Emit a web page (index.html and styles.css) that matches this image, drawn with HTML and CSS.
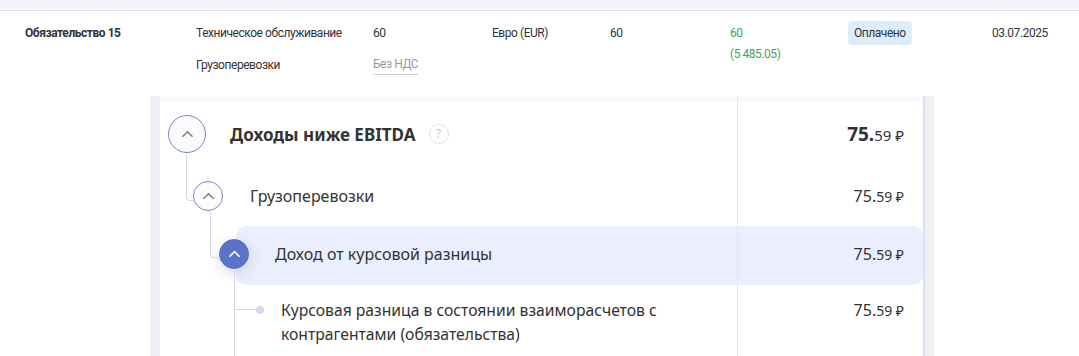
FILE: index.html
```html
<!DOCTYPE html>
<html lang="ru">
<head>
    <meta charset="UTF-8">
    <meta name="viewport" content="width=device-width, initial-scale=1.0">
    <title>Обязательства и доходы</title>
    <link rel="stylesheet" href="styles.css">
</head>
<body>
    <div class="toolbar-strip"></div>

    <!-- Obligation row -->
    <div class="obligation">
        <div class="cell name">Обязательство 15</div>
        <div class="cell stack">
            <span>Техническое обслуживание</span>
            <span>Грузоперевозки</span>
        </div>
        <div class="cell stack">
            <span>60</span>
            <span class="vat">Без НДС</span>
        </div>
        <div class="cell">Евро (EUR)</div>
        <div class="cell">60</div>
        <div class="cell paid-sum">
            <span>60</span>
            <span>(5 485.05)</span>
        </div>
        <div class="cell"><span class="badge">Оплачено</span></div>
        <div class="cell">03.07.2025</div>
    </div>

    <!-- Income tree -->
    <div class="report">
        <div class="report-cap">
            <div></div>
            <div class="value-col"></div>
        </div>

        <div class="tree-row level-1">
            <div class="label-col">
                <button class="toggle toggle-lg">
                    <svg viewBox="0 0 14 8" width="13" height="8"><path d="M1.5 7 L7 1.5 L12.5 7" fill="none" stroke="#7e7e7e" stroke-width="1.6"/></svg>
                </button>
                <span class="title">Доходы ниже EBITDA</span>
                <span class="help">?</span>
            </div>
            <div class="value-col">
                <span class="amount amount-lg"><b>75.</b>59 ₽</span>
            </div>
        </div>

        <div class="tree-row level-2">
            <div class="label-col">
                <button class="toggle sub">
                    <svg viewBox="0 0 14 8" width="13" height="8"><path d="M1.5 7 L7 1.5 L12.5 7" fill="none" stroke="#7e7e7e" stroke-width="1.6"/></svg>
                </button>
                <span class="label">Грузоперевозки</span>
            </div>
            <div class="value-col">
                <span class="amount"><span class="int">75.</span>59 ₽</span>
            </div>
        </div>

        <div class="tree-row level-3 active">
            <div class="label-col">
                <button class="toggle sub filled">
                    <svg viewBox="0 0 14 8" width="13" height="8"><path d="M1.5 7 L7 1.5 L12.5 7" fill="none" stroke="#ffffff" stroke-width="1.7"/></svg>
                </button>
                <span class="label">Доход от курсовой разницы</span>
            </div>
            <div class="value-col">
                <span class="amount"><span class="int">75.</span>59 ₽</span>
            </div>
        </div>

        <div class="tree-row level-4">
            <div class="label-col">
                <span class="leaf-dot"></span>
                <span class="label">Курсовая разница в состоянии взаиморасчетов с контрагентами (обязательства)</span>
            </div>
            <div class="value-col">
                <span class="amount"><span class="int">75.</span>59 ₽</span>
            </div>
        </div>
    </div>
</body>
</html>
```

FILE: styles.css
```css
body {
    margin: 0;
    font-family: 'Noto Sans', sans-serif;
    color: #333333;
    background-color: #ffffff;
}
.toolbar-strip {
    height: 10px;
    background-color: #f5f5f6;
    border-bottom: 1px solid #d9def4;
}

/* obligation row */
.obligation {
    display: grid;
    grid-template-columns: 171px 177px 119px 118px 120px 118px 144px 1fr;
    padding: 12px 0 0 25px;
    height: 73px;
    font-family: Roboto, sans-serif;
    font-size: 12px;
    letter-spacing: -0.45px;
    line-height: 20px;
    color: #333333;
}
.cell {
    display: flex;
    flex-direction: column;
    align-items: flex-start;
}
.name {
    font-weight: 700;
}
.stack {
    gap: 12px;
}
.vat {
    color: #9a9a9a;
    border-bottom: 1px solid #cfcfcf;
    line-height: 19px;
}
.paid-sum {
    color: #3fa45b;
    gap: 1px;
}
.badge {
    display: inline-block;
    margin-top: -2px;
    padding: 0 6px;
    line-height: 24px;
    border-radius: 4px;
    background-color: #dcedfc;
    color: #333333;
}

/* report panel */
.report {
    margin-left: 150px;
    width: 763px;
    height: 260px;
    overflow: hidden;
    border-left: 10px solid #eff0f6;
    border-right: 2px solid #dde0eb;
    box-shadow: 9px 0 0 #eff0f6;
    background-color: #ffffff;
}
.report-cap {
    display: grid;
    grid-template-columns: 577px 1fr;
    height: 6px;
    background-color: #f8f9fb;
}
.tree-row {
    display: grid;
    grid-template-columns: 577px 1fr;
}
.value-col {
    border-left: 1px solid #e2e4ee;
    display: flex;
    justify-content: flex-end;
    align-items: center;
    padding-right: 19px;
}
.label-col {
    display: flex;
    align-items: center;
}
.level-1 {
    height: 64px;
}
.level-1 .label-col {
    padding-left: 8px;
}
.level-2 {
    height: 60px;
}
.level-2 .label-col {
    padding-left: 33px;
}
.level-3 {
    height: 59px;
}
.level-3.active {
    margin-left: 76px;
    grid-template-columns: 501px 1fr;
    background-color: #ebeefc;
    border-radius: 10px;
}
.level-3 .label-col {
    margin-left: -17px;
}
.level-3 .label-col,
.level-3 .value-col {
    padding-bottom: 3px;
}
.level-4 {
    padding-top: 13px;
}
.level-4 .label-col {
    padding-left: 96px;
    align-items: flex-start;
}
.level-4 .value-col {
    align-items: flex-start;
    margin-top: -13px;
    padding-top: 13px;
    height: 80px;
}

/* expand toggles and connectors */
.toggle {
    position: relative;
    flex: none;
    width: 30px;
    height: 30px;
    padding: 0;
    border: 1px solid #6f88c9;
    border-radius: 50%;
    background-color: #fbfbfd;
    display: flex;
    align-items: center;
    justify-content: center;
}
.toggle svg {
    margin-top: -1px;
}
.toggle-lg {
    width: 38px;
    height: 38px;
}
.toggle.filled {
    background-color: #5a73c8;
    border-color: #5a73c8;
    box-shadow: 0 4px 14px rgba(40, 40, 60, 0.16);
}
.level-2 .toggle::before {
    content: "";
    position: absolute;
    left: -8px;
    top: -28px;
    width: 7px;
    height: 46px;
    border-left: 1px solid #d3d8eb;
    border-bottom: 1px solid #d3d8eb;
    border-bottom-left-radius: 4px;
}
.level-3 .toggle::before {
    content: "";
    position: absolute;
    left: -10px;
    top: -30px;
    width: 9px;
    height: 47px;
    border-left: 1px solid #d3d8eb;
    border-bottom: 1px solid #d3d8eb;
    border-bottom-left-radius: 4px;
}
.level-3 .toggle::after {
    content: "";
    position: absolute;
    left: 14px;
    top: 30px;
    width: 1px;
    height: 90px;
    background-color: #d3d8eb;
}
.leaf-dot {
    position: relative;
    flex: none;
    width: 8px;
    height: 8px;
    margin-top: 8px;
    border-radius: 50%;
    background-color: #d3d9ee;
}
.leaf-dot::before {
    content: "";
    position: absolute;
    right: 8px;
    top: 3px;
    width: 21px;
    height: 1px;
    background-color: #d3d8eb;
}

/* labels */
.title {
    margin-left: 24px;
    font-size: 17px;
    font-weight: 700;
}
.help {
    margin-left: 13px;
    width: 18px;
    height: 18px;
    border: 1px solid #e2e2e2;
    border-radius: 50%;
    color: #c9c9c9;
    font-size: 12px;
    line-height: 18px;
    text-align: center;
}
.label {
    margin-left: 27px;
    font-size: 16px;
}
.level-3 .label {
    margin-left: 26px;
}
.level-4 .label {
    margin-left: 17px;
    font-size: 15.7px;
    line-height: 24px;
    width: 400px;
}

/* amounts */
.amount {
    font-size: 14px;
    line-height: 24px;
}
.amount .int {
    font-size: 16px;
}
.amount-lg {
    font-size: 15px;
}
.amount-lg b {
    font-size: 19px;
}
```
